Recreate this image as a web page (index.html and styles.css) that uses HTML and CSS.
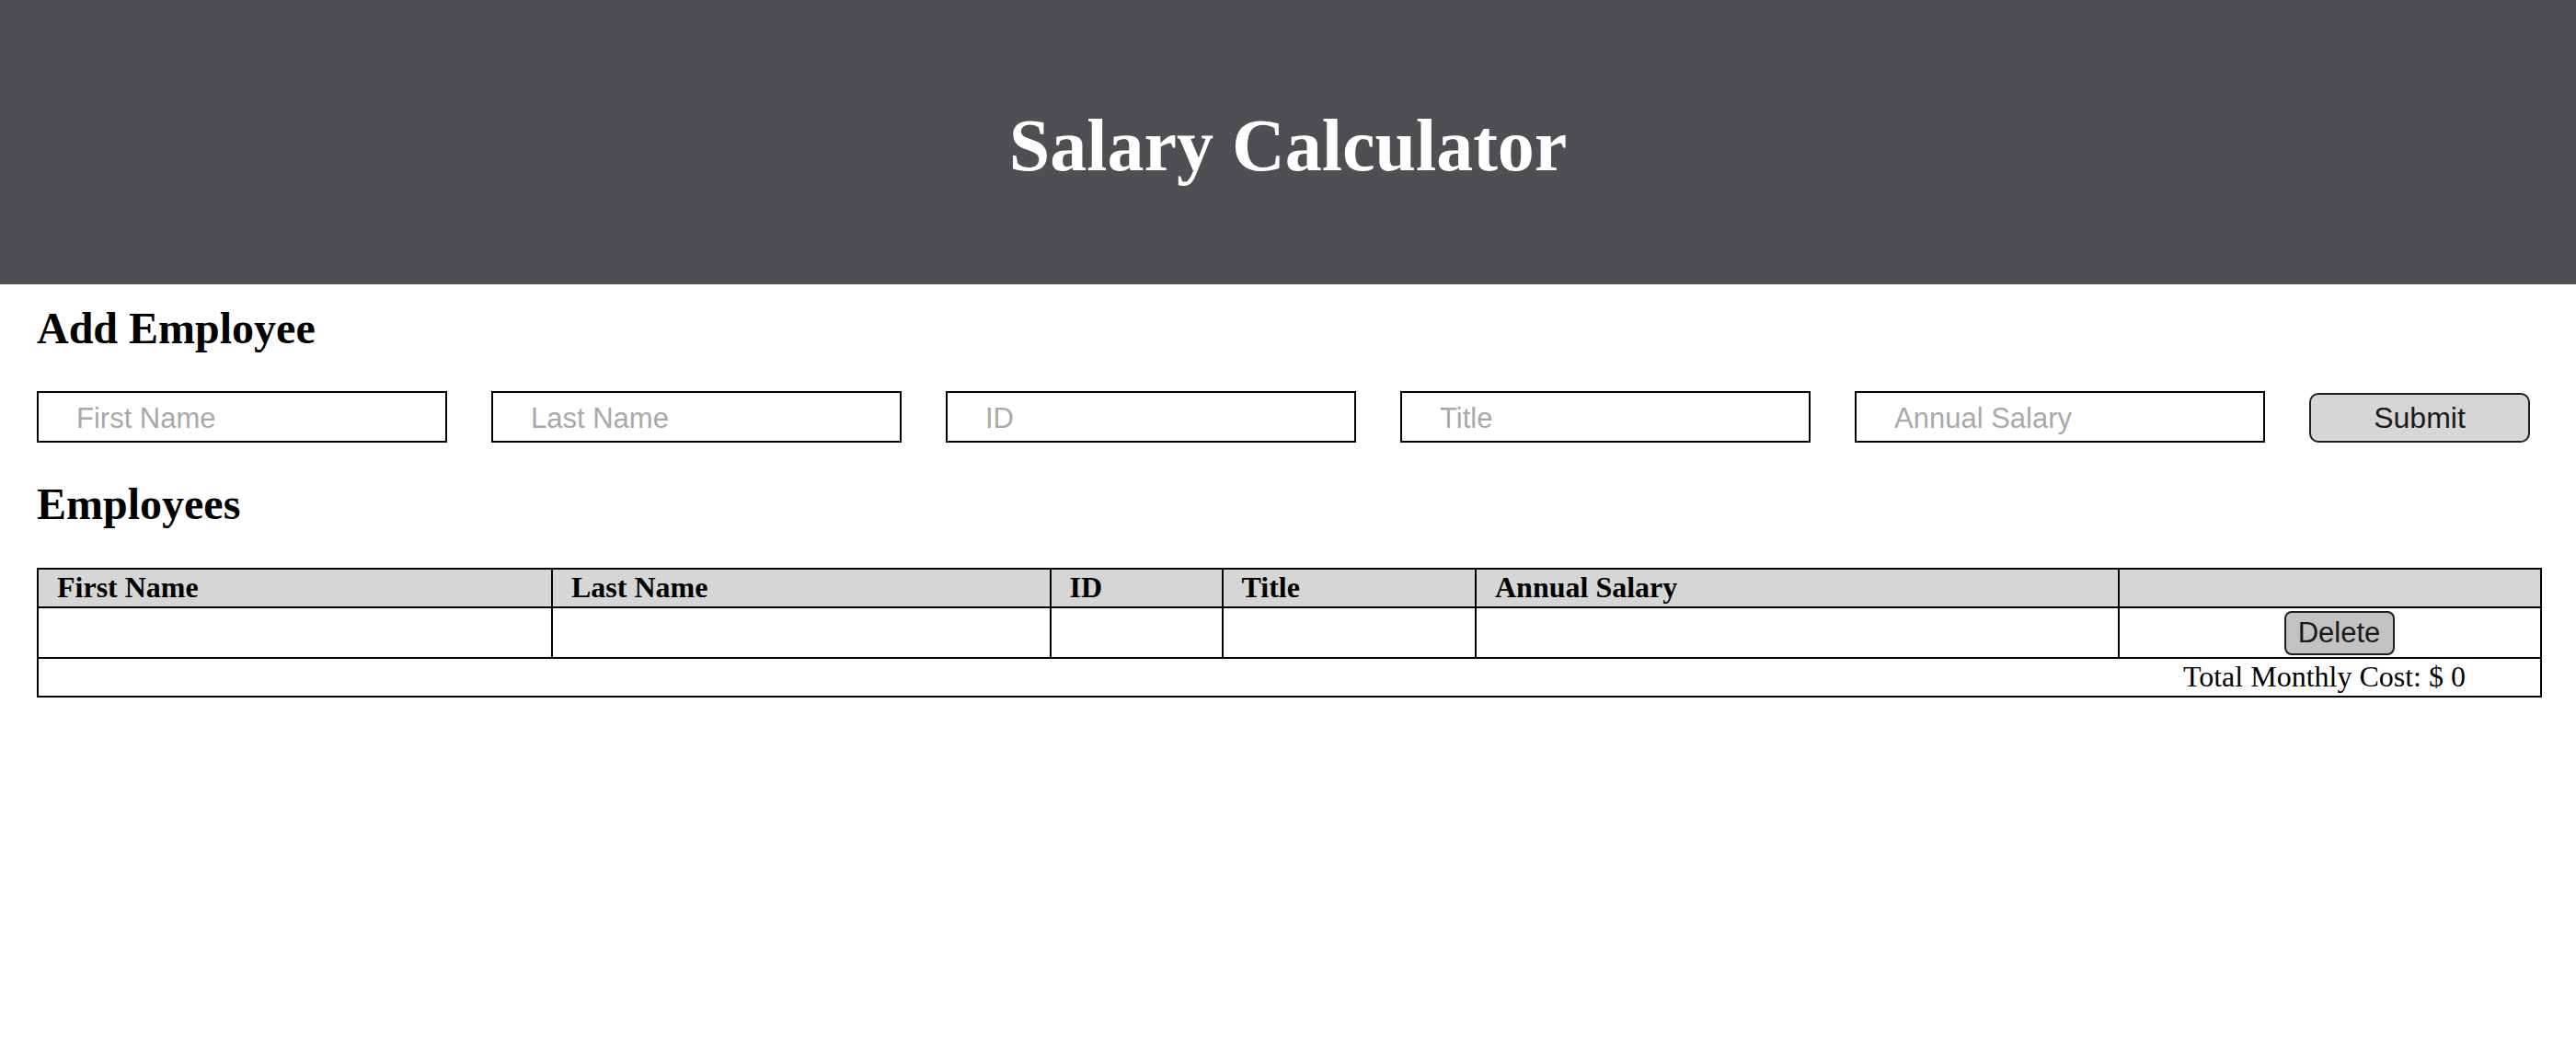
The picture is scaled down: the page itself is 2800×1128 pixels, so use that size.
FILE: index.html
```html
<!DOCTYPE html>
<html lang="en">
<head>
<meta charset="utf-8">
<title>Salary Calculator</title>
<link rel="stylesheet" href="styles.css">
</head>
<body>
<header class="site-header">
  <h1 class="site-title">Salary Calculator</h1>
</header>
<main class="content">
  <h2 class="section-title first">Add Employee</h2>
  <form class="employee-form">
    <input class="field" type="text" placeholder="First Name">
    <input class="field" type="text" placeholder="Last Name">
    <input class="field" type="text" placeholder="ID">
    <input class="field" type="text" placeholder="Title">
    <input class="field" type="text" placeholder="Annual Salary">
    <button class="submit-btn" type="button">Submit</button>
  </form>
  <h2 class="section-title second">Employees</h2>
  <table class="emp-table">
    <colgroup>
      <col class="c1"><col class="c2"><col class="c3"><col class="c4"><col class="c5"><col class="c6">
    </colgroup>
    <thead>
      <tr>
        <th>First Name</th>
        <th>Last Name</th>
        <th>ID</th>
        <th>Title</th>
        <th>Annual Salary</th>
        <th></th>
      </tr>
    </thead>
    <tbody>
      <tr>
        <td></td>
        <td></td>
        <td></td>
        <td></td>
        <td></td>
        <td class="action-cell"><button class="delete-btn" type="button">Delete</button></td>
      </tr>
    </tbody>
    <tfoot>
      <tr>
        <td class="total-cell" colspan="6">Total Monthly Cost: $ 0</td>
      </tr>
    </tfoot>
  </table>
</main>
</body>
</html>
```

FILE: styles.css
```css
html, body {
  margin: 0;
  padding: 0;
  background: #ffffff;
}

body {
  font-family: "Liberation Serif", "Times New Roman", serif;
  color: #000;
}

.site-header {
  box-sizing: border-box;
  height: 309px;
  background: #4e4f52;
  padding-top: 112px;
}

.site-title {
  margin: 0;
  text-align: center;
  color: #ffffff;
  font-size: 80px;
  line-height: 92px;
  font-weight: bold;
}

.content {
  padding: 0 40px;
}

.section-title {
  margin: 0;
  font-size: 48px;
  line-height: 56px;
  font-weight: bold;
}

.section-title.first {
  margin-top: 19.5px;
  margin-bottom: 40.5px;
}

.section-title.second {
  margin-top: 39px;
  margin-bottom: 41px;
}

.employee-form {
  display: flex;
  align-items: center;
  gap: 48px;
  height: 56px;
}

.field {
  box-sizing: border-box;
  width: 446px;
  height: 56px;
  margin: 0;
  border: 2px solid #000;
  border-radius: 0;
  padding: 3px 20px 0 41px;
  font-family: "Liberation Sans", Arial, sans-serif;
  font-size: 31px;
  color: #000;
  background: #fff;
  outline: none;
}

.field::placeholder {
  color: #a9a9a9;
}

.submit-btn {
  box-sizing: border-box;
  width: 240px;
  height: 54px;
  margin: 2px 0 0 0;
  border: 2px solid #1e1e1e;
  border-radius: 10px;
  background: #d6d6d6;
  font-family: "Liberation Sans", Arial, sans-serif;
  font-size: 32px;
  color: #1a1a1a;
  padding: 0;
}

.emp-table {
  box-sizing: border-box;
  width: 2722px;
  border-collapse: collapse;
  table-layout: fixed;
  border: 2px solid #000;
}

.c1 { width: 559px; }
.c2 { width: 541.5px; }
.c3 { width: 187px; }
.c4 { width: 275.5px; }
.c5 { width: 699px; }
.c6 { width: 459px; }

.emp-table th,
.emp-table td {
  border: 2px solid #000;
  padding: 1px 0 3px 20px;
  font-size: 32px;
  line-height: 36px;
  text-align: left;
}

.emp-table th {
  background: #d6d6d6;
  font-weight: bold;
}

.emp-table td.action-cell {
  text-align: center;
  padding-top: 3px;
  padding-bottom: 2px;
}

.delete-btn {
  box-sizing: border-box;
  width: 120px;
  height: 48px;
  margin: 0;
  padding: 0;
  border: 2px solid #1e1e1e;
  border-radius: 8px;
  background: #c2c2c2;
  font-family: "Liberation Sans", Arial, sans-serif;
  font-size: 31px;
  color: #1a1a1a;
  vertical-align: middle;
}

.emp-table td.total-cell {
  text-align: right;
  padding-right: 81px;
  padding-left: 0;
}
```
